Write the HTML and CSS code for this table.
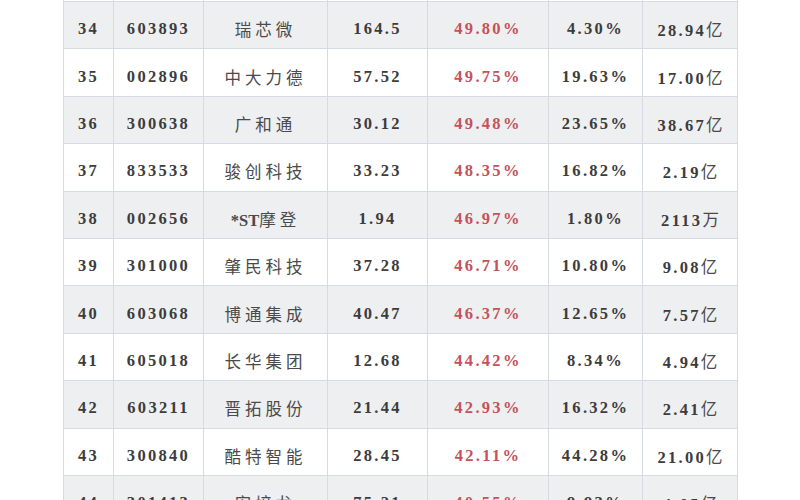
FILE: index.html
```html
<!DOCTYPE html>
<html lang="zh">
<head>
<meta charset="utf-8">
<link rel="stylesheet" href="styles.css">
</head>
<body>
<table class="stocks">
  <colgroup>
    <col class="c-no"><col class="c-code"><col class="c-name"><col class="c-price"><col class="c-pct"><col class="c-rate"><col class="c-cap">
  </colgroup>
  <tbody>
    <tr class="top"><td></td><td></td><td></td><td></td><td></td><td></td><td></td></tr>
    <tr><td>34</td><td>603893</td><td class="name">瑞芯微</td><td>164.5</td><td class="up">49.80%</td><td>4.30%</td><td>28.94<span class="cn">亿</span></td></tr>
    <tr><td>35</td><td>002896</td><td class="name">中大力德</td><td>57.52</td><td class="up">49.75%</td><td>19.63%</td><td>17.00<span class="cn">亿</span></td></tr>
    <tr><td>36</td><td>300638</td><td class="name">广和通</td><td>30.12</td><td class="up">49.48%</td><td>23.65%</td><td>38.67<span class="cn">亿</span></td></tr>
    <tr><td>37</td><td>833533</td><td class="name">骏创科技</td><td>33.23</td><td class="up">48.35%</td><td>16.82%</td><td>2.19<span class="cn">亿</span></td></tr>
    <tr><td>38</td><td>002656</td><td class="name"><span class="lat">*ST</span>摩登</td><td>1.94</td><td class="up">46.97%</td><td>1.80%</td><td>2113<span class="cn">万</span></td></tr>
    <tr><td>39</td><td>301000</td><td class="name">肇民科技</td><td>37.28</td><td class="up">46.71%</td><td>10.80%</td><td>9.08<span class="cn">亿</span></td></tr>
    <tr><td>40</td><td>603068</td><td class="name">博通集成</td><td>40.47</td><td class="up">46.37%</td><td>12.65%</td><td>7.57<span class="cn">亿</span></td></tr>
    <tr><td>41</td><td>605018</td><td class="name">长华集团</td><td>12.68</td><td class="up">44.42%</td><td>8.34%</td><td>4.94<span class="cn">亿</span></td></tr>
    <tr><td>42</td><td>603211</td><td class="name">晋拓股份</td><td>21.44</td><td class="up">42.93%</td><td>16.32%</td><td>2.41<span class="cn">亿</span></td></tr>
    <tr><td>43</td><td>300840</td><td class="name">酷特智能</td><td>28.45</td><td class="up">42.11%</td><td>44.28%</td><td>21.00<span class="cn">亿</span></td></tr>
    <tr><td>44</td><td>301413</td><td class="name">安培龙</td><td>75.21</td><td class="up">40.55%</td><td>9.93%</td><td>4.05<span class="cn">亿</span></td></tr>
  </tbody>
</table>
</body>
</html>
```
FILE: styles.css
```css
html, body {
  margin: 0;
  padding: 0;
  background: #ffffff;
  overflow: hidden;
}
.stocks {
  margin: -46.4px 0 0 63px;
  border-collapse: collapse;
  table-layout: fixed;
  width: 674px;
  font-family: "Liberation Serif", "Noto Sans CJK SC", serif;
  font-weight: bold;
  font-size: 16.5px;
  letter-spacing: 2.3px;
  color: #3c3c3c;
}
.c-no { width: 50px; }
.c-code { width: 90px; }
.c-name { width: 124px; }
.c-price { width: 100px; }
.c-pct { width: 121px; }
.c-rate { width: 94px; }
.c-cap { width: 95px; }
.stocks tr { height: 47.4px; }
.stocks tr:nth-child(even) { background: #eeeff1; }
.stocks td {
  border: 1px solid #d6dbe1;
  text-align: center;
  vertical-align: middle;
  padding: 8px 0 0 0;
  white-space: nowrap;
  overflow: hidden;
}
.stocks .name {
  font-family: "Noto Sans CJK SC", sans-serif;
  font-weight: normal;
  font-size: 16.5px;
  letter-spacing: 4px;
  color: #4a4a4a;
}
.stocks .name .lat {
  font-family: "Liberation Serif", serif;
  font-weight: bold;
  letter-spacing: 0;
}
.stocks .up { color: #c4525a; }
.stocks .cn {
  font-family: "Noto Sans CJK SC", sans-serif;
  font-weight: normal;
  letter-spacing: 0;
  color: #4a4a4a;
}
```
